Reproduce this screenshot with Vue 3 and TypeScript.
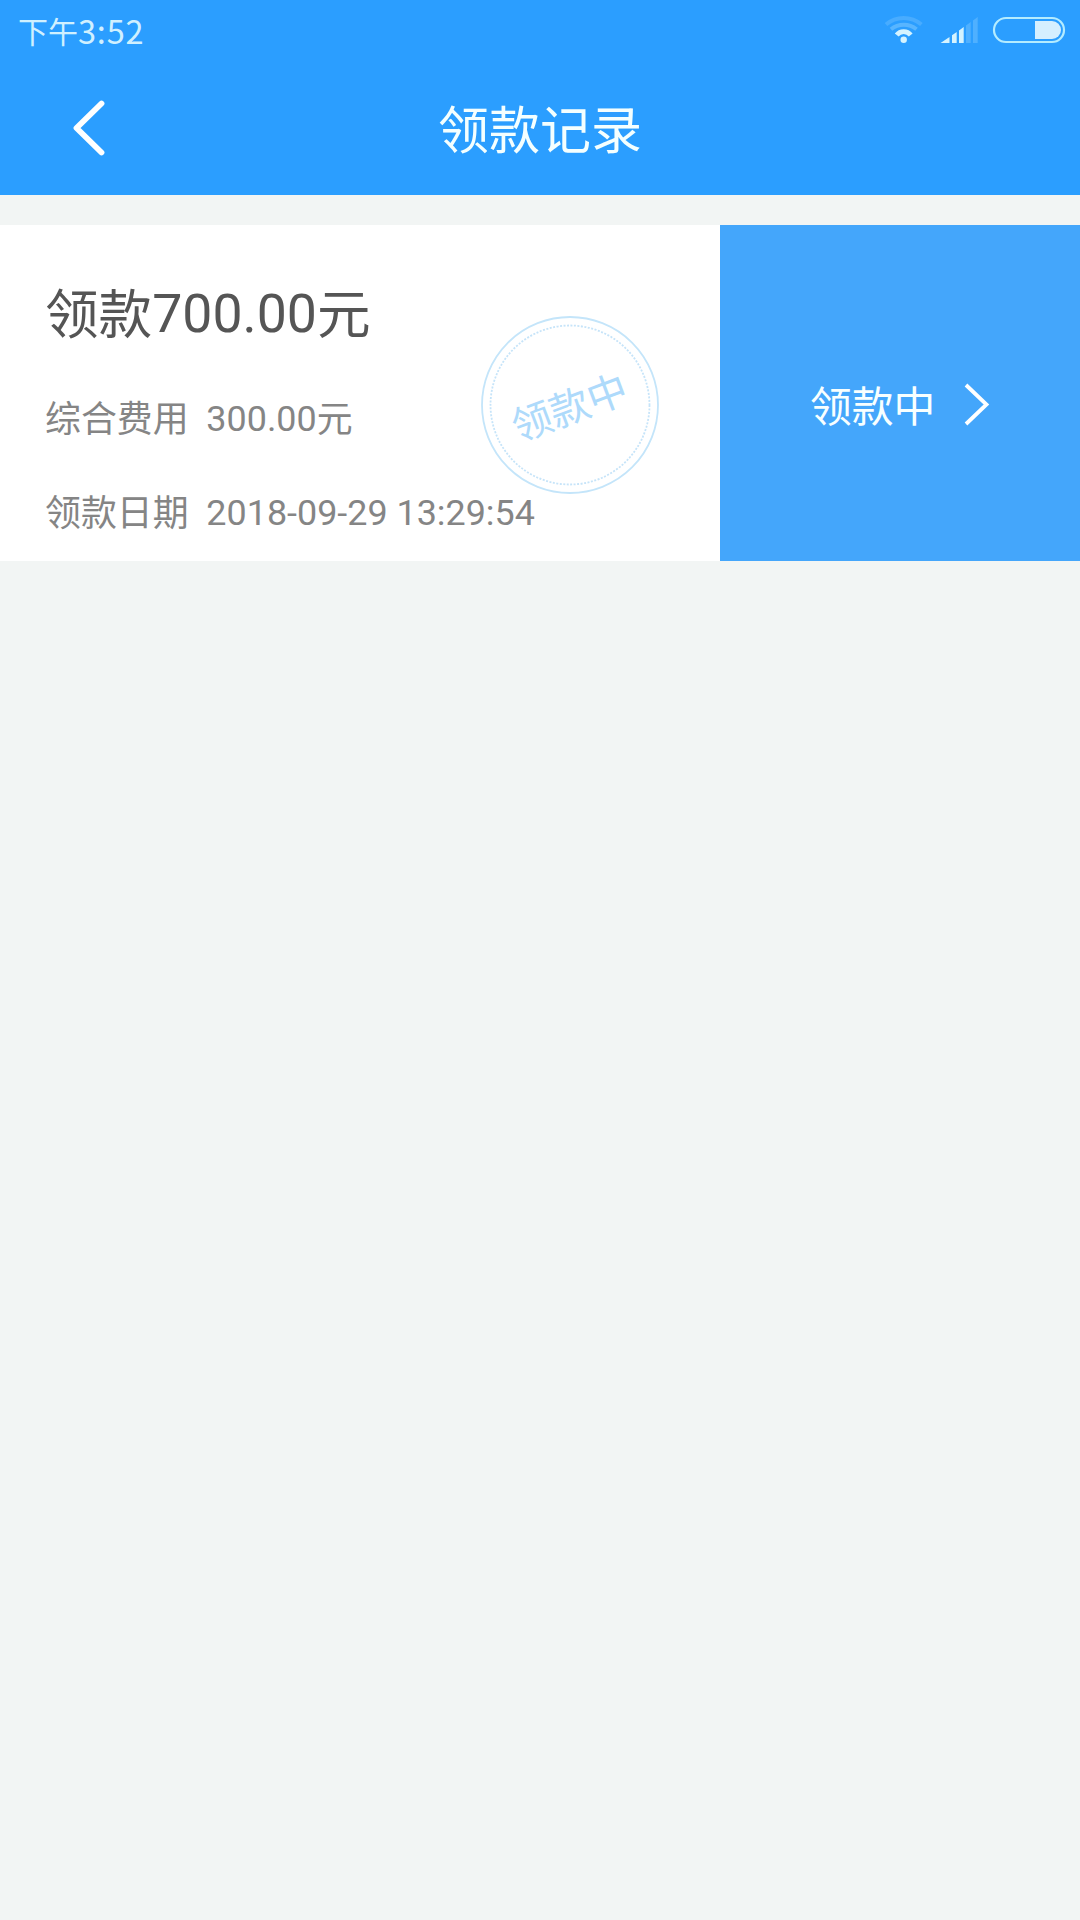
<script setup lang="ts">
interface Row {
  label: string
  value: string
  unit: string
}

const title = '领款记录'
const status = '领款中'
const rows: Row[] = [
  { label: '综合费用', value: '300.00', unit: '元' },
  { label: '领款日期', value: '2018-09-29 13:29:54', unit: '' },
]
</script>

<template>
  <div class="screen">
    <header class="header">
      <div class="statusbar">
        <span class="time">下午<span class="clock">3:52</span></span>
        <svg class="indicators" width="196" height="36" viewBox="0 0 196 36">
          <g fill="none" stroke-linecap="butt">
            <path d="M2 14.500 A27.300 27.300 0 0 1 37.400 14.500" stroke="#48acff" stroke-width="4" />
            <path d="M7 19.200 A20.300 20.300 0 0 1 32.500 19.200" stroke="#58b5ff" stroke-width="4" />
            <path d="M12.700 25 A8.800 8.800 0 0 1 26.700 25" stroke="#d5f3ff" stroke-width="4.800" />
          </g>
          <circle cx="19.700" cy="29.800" r="3.200" fill="#d5f3ff" />
          <path d="M56.500 33 L65.500 27 V33 Z M68 33 V25.300 L72.700 22 V33 Z M75 33 V20.500 L79.700 17 V33 Z" fill="#d5f3ff" />
          <path d="M82 33 V15.500 L86.700 12 V33 Z M89 33 V10.500 L93.700 7 V33 Z" fill="#4fb0ff" />
          <rect x="110" y="8" width="70" height="24" rx="12" fill="none" stroke="#b4ecff" stroke-width="2.200" />
          <path d="M151 11 H168 A9 9 0 0 1 168 29 H151 Z" fill="#d5efff" />
        </svg>
      </div>
      <div class="navbar">
        <svg class="back" width="34" height="58" viewBox="0 0 34 58">
          <path d="M30.500 4.500 L5.500 29 L30.500 53.500" fill="none" stroke="#fff" stroke-width="5.800" stroke-linecap="round" stroke-linejoin="round" />
        </svg>
        <h1 class="title">{{ title }}</h1>
      </div>
    </header>

    <main class="list">
      <article class="card">
        <div class="info">
          <div class="amount"><span class="han">领款</span>700.00<span class="han">元</span></div>
          <div v-for="row in rows" :key="row.label" class="row"><span class="han">{{ row.label }}</span>&nbsp;&nbsp;{{ row.value }}<span class="han">{{ row.unit }}</span></div>
          <div class="stamp">
            <svg width="180" height="180" viewBox="0 0 180 180">
              <circle cx="90" cy="90" r="88" fill="none" stroke="#c4e5fa" stroke-width="1.800" />
              <circle cx="90" cy="90" r="79.500" fill="none" stroke="#c6e4f9" stroke-width="1.800" stroke-dasharray="2 1.500" />
            </svg>
            <span class="stamp-text">{{ status }}</span>
          </div>
        </div>
        <div class="action">
          <span class="action-label">{{ status }}</span>
          <svg width="26" height="44" viewBox="0 0 26 44">
            <path d="M2 2 L22.500 21.500 L2 41" fill="none" stroke="#fff" stroke-width="3.800" />
          </svg>
        </div>
      </article>
    </main>
  </div>
</template>

<style>
body {
  background: #f2f5f4;
}
</style>

<style scoped>
.screen {
  width: 1080px;
  min-height: 1920px;
  background: #f2f5f4;
  font-family: Roboto, "Noto Sans CJK SC", sans-serif;
}

.header {
  height: 195px;
  background: #2b9eff;
  color: #f4ffff;
}

.statusbar {
  display: flex;
  justify-content: space-between;
  height: 62px;
  padding: 10px 0 0 18px;
  box-sizing: border-box;
}

.time {
  font-family: "Noto Sans CJK SC", sans-serif;
  font-size: 30px;
  line-height: 40px;
  color: #d0f0ff;
}

.clock {
  font-size: 32.5px;
  line-height: 1;
  letter-spacing: 0.8px;
  vertical-align: -1px;
}

.navbar {
  position: relative;
  display: flex;
  align-items: center;
  justify-content: center;
  height: 132px;
}

.back {
  position: absolute;
  left: 71px;
  top: 37px;
}

.title {
  margin: 0;
  padding-top: 8px;
  font-size: 51px;
  line-height: 64px;
  font-weight: 400;
}

.list {
  padding-top: 30px;
}

.card {
  display: flex;
  height: 336px;
  background: #fff;
}

.info {
  position: relative;
  width: 720px;
  padding: 57px 0 0 45px;
  box-sizing: border-box;
}

.amount {
  height: 64px;
  font-size: 53.6px;
  line-height: 64px;
  color: #555;
}

.han {
  line-height: 1;
  vertical-align: -0.03em;
}

.row {
  height: 42px;
  margin-top: 52px;
  font-size: 35.9px;
  line-height: 42px;
  color: #858585;
}

.stamp {
  position: absolute;
  left: 480px;
  top: 90px;
  width: 180px;
  height: 180px;
}

.stamp svg {
  display: block;
}

.stamp-text {
  position: absolute;
  inset: 7px 0 0 0;
  display: flex;
  align-items: center;
  justify-content: center;
  font-size: 40px;
  line-height: 48px;
  color: #aedafb;
  transform: rotate(-20.5deg);
}

.action {
  flex: 1;
  display: flex;
  align-items: center;
  padding: 24px 0 0 90px;
  background: #44a6fb;
  color: #f8ffff;
  font-size: 41.8px;
  line-height: 50px;
}

.action-label {
  padding-top: 6px;
}

.action svg {
  margin-left: 29px;
}
</style>
